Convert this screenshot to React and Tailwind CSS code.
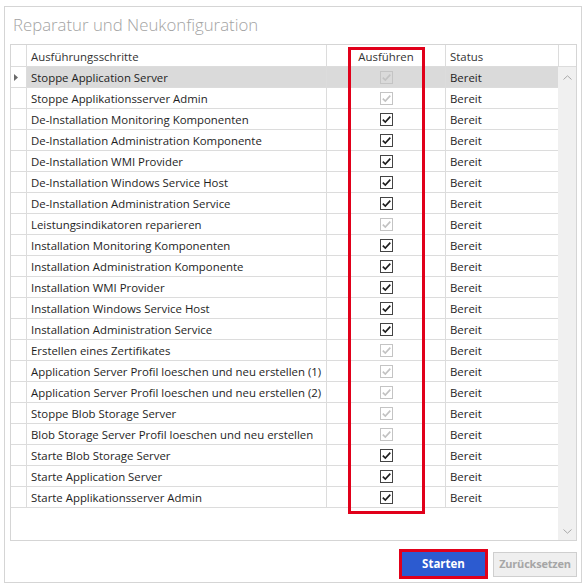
import React from 'react'

const font = { fontFamily: '"Open Sans", "Noto Sans", sans-serif' }

const steps = [
  ['Stoppe Application Server', false],
  ['Stoppe Applikationsserver Admin', false],
  ['De-Installation Monitoring Komponenten', true],
  ['De-Installation Administration Komponente', true],
  ['De-Installation WMI Provider', true],
  ['De-Installation Windows Service Host', true],
  ['De-Installation Administration Service', true],
  ['Leistungsindikatoren reparieren', false],
  ['Installation Monitoring Komponenten', true],
  ['Installation Administration Komponente', true],
  ['Installation WMI Provider', true],
  ['Installation Windows Service Host', true],
  ['Installation Administration Service', true],
  ['Erstellen eines Zertifikates', false],
  ['Application Server Profil loeschen und neu erstellen (1)', false],
  ['Application Server Profil loeschen und neu erstellen (2)', false],
  ['Stoppe Blob Storage Server', false],
  ['Blob Storage Server Profil loeschen und neu erstellen', false],
  ['Starte Blob Storage Server', true],
  ['Starte Application Server', true],
  ['Starte Applikationsserver Admin', true],
]

const CheckBox = ({ enabled }) => (
  <div
    className={`w-[13px] h-[13px] border flex items-center justify-center ${
      enabled ? 'border-[#444] bg-white' : 'border-[#c4c4c4]'
    }`}
  >
    <svg width="11" height="11" viewBox="0 0 11 11">
      <path
        d="M1.8 5.6 L4.3 8.1 L9.3 2.6"
        fill="none"
        stroke={enabled ? '#1c1c1c' : '#c2c2c2'}
        strokeWidth="1.6"
      />
    </svg>
  </div>
)

const Row = ({ name, enabled, selected }) => (
  <div className="flex h-[21px] border-b border-[#dcdcdc]">
    <div className="w-[16px] border-r border-[#dcdcdc] flex items-center pl-[3px]">
      {selected && (
        <svg width="5" height="7" viewBox="0 0 5 7">
          <path d="M0 0 L4 3.5 L0 7 Z" fill="#6a6a6a" />
        </svg>
      )}
    </div>
    <div className={`flex flex-1 ${selected ? 'bg-[#dadada]' : ''}`}>
      <div className="w-[300px] border-r border-[#dcdcdc] pl-[4px] pt-[2px] flex items-center text-[11.4px] text-[#1e1e1e] whitespace-nowrap overflow-hidden">
        {name}
      </div>
      <div className="w-[119px] border-r border-[#dcdcdc] flex items-center justify-center">
        <CheckBox enabled={enabled} />
      </div>
      <div className="flex-1 pl-[4px] pt-[2px] flex items-center text-[11.4px] text-[#1e1e1e]">Bereit</div>
    </div>
  </div>
)

export default function App() {
  return (
    <div className="w-[585px] h-[586px] bg-white relative overflow-hidden" style={font}>
      <div className="ml-[4px] mt-[6px] w-[578px] h-[577px] border border-[#d5d5d5] flex flex-col">
        <div className="h-[37px] pl-[8px] pt-[6px] text-[16.8px] leading-[24px] font-light text-[#a3a3a3]">
          Reparatur und Neukonfiguration
        </div>

        {/* grid */}
        <div className="ml-[5px] w-[567px] h-[497px] border border-[#d5d5d5] flex flex-col">
          <div className="flex h-[22px] border-b border-[#dcdcdc] text-[11.4px] text-[#333]">
            <div className="w-[16px] border-r border-[#dcdcdc]" />
            <div className="w-[300px] border-r border-[#dcdcdc] pl-[4px] pt-[2px] flex items-center">
              Ausführungsschritte
            </div>
            <div className="w-[119px] border-r border-[#dcdcdc] pt-[2px] flex items-center justify-center">
              Ausführen
            </div>
            <div className="w-[113px] border-r border-[#dcdcdc] pl-[4px] pt-[2px] flex items-center">Status</div>
            <div className="flex-1" />
          </div>
          <div className="flex flex-1">
            <div className="flex-1 flex flex-col">
              {steps.map(([name, enabled], i) => (
                <Row key={name} name={name} enabled={enabled} selected={i === 0} />
              ))}
            </div>
            <div className="w-[18px] bg-[#f0f0f0] flex flex-col items-center justify-between pt-[8px] pb-[6px]">
              <svg width="9" height="5" viewBox="0 0 9 5">
                <path d="M0.5 4.5 L4.5 0.8 L8.5 4.5" fill="none" stroke="#a8a8a8" strokeWidth="1" />
              </svg>
              <svg width="9" height="5" viewBox="0 0 9 5">
                <path d="M0.5 0.5 L4.5 4.2 L8.5 0.5" fill="none" stroke="#a8a8a8" strokeWidth="1" />
              </svg>
            </div>
          </div>
        </div>

        {/* buttons */}
        <div className="flex justify-end items-center gap-[5px] mt-[8px] pr-[4px]">
          <div className="border-[3px] border-[#e1001a]">
            <button className="block w-[83px] h-[24px] bg-[#2c5bd0] text-white text-[11.5px] font-bold">
              Starten
            </button>
          </div>
          <button className="block w-[84px] h-[25px] bg-[#efefef] border border-[#cfcfcf] text-[#a6a6a6] text-[11px] font-bold tracking-[-0.2px]">
            Zurücksetzen
          </button>
        </div>
      </div>

      {/* highlight around the Ausführen column */}
      <div className="absolute left-[348px] top-[47px] w-[77px] h-[467px] border-[3px] border-[#e1001a] pointer-events-none" />
    </div>
  )
}
